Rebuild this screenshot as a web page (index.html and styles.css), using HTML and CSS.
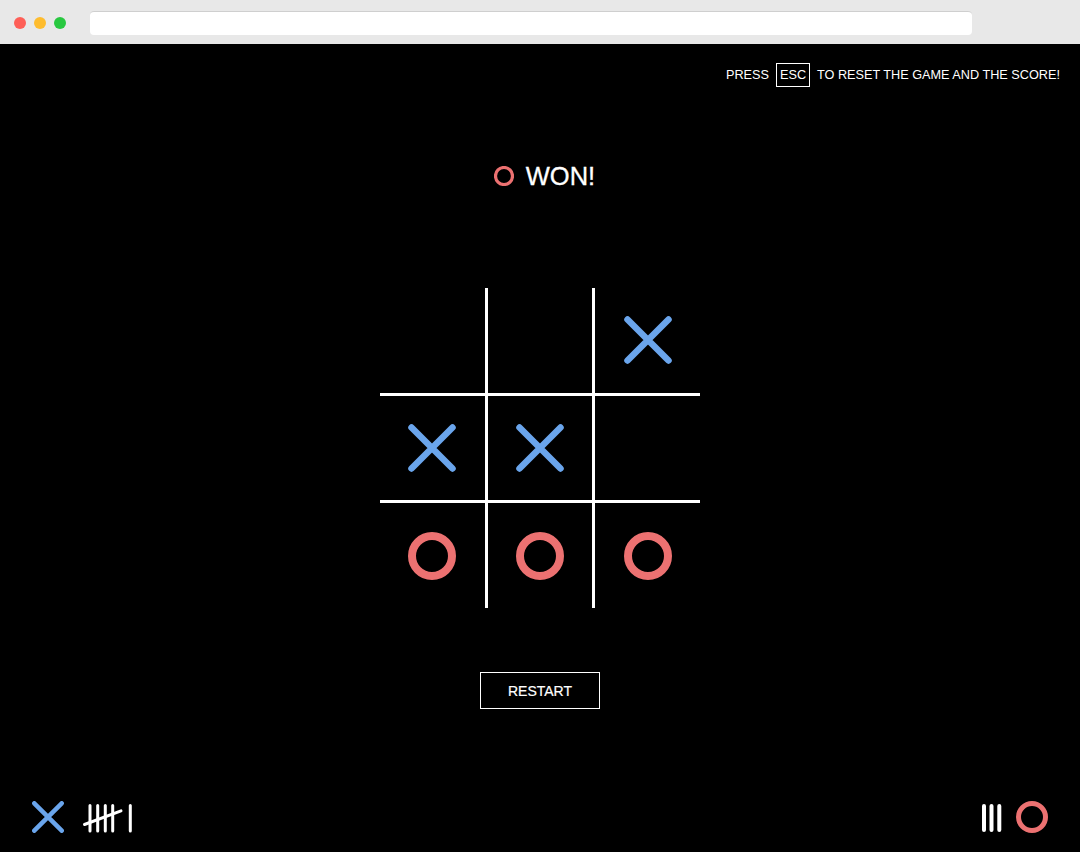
FILE: index.html
```html
<!DOCTYPE html>
<html lang="en">
<head>
<meta charset="utf-8">
<title>Tic Tac Toe</title>
<link rel="stylesheet" href="styles.css">
</head>
<body>
<div class="chrome">
  <div class="lights">
    <span class="light red"></span>
    <span class="light yellow"></span>
    <span class="light green"></span>
  </div>
  <div class="address"></div>
</div>
<main class="game">
  <div class="hint">
    <span>PRESS</span>
    <span class="key">ESC</span>
    <span>TO RESET THE GAME AND THE SCORE!</span>
  </div>
  <div class="status">
    <svg class="status-o" viewBox="0 0 20 20" width="20" height="20"><circle cx="10" cy="10" r="8.5" fill="none" stroke="#ec7171" stroke-width="3.2"/></svg>
    <span class="status-text">WON!</span>
  </div>
  <div class="board">
    <div class="cell"></div>
    <div class="cell"></div>
    <div class="cell"><svg class="mark" viewBox="0 0 48 48" width="48" height="48"><path d="M3.5 3.5 L44.5 44.5 M44.5 3.5 L3.5 44.5" stroke="#6aa5ec" stroke-width="6.5" stroke-linecap="round" fill="none"/></svg></div>
    <div class="cell"><svg class="mark" viewBox="0 0 48 48" width="48" height="48"><path d="M3.5 3.5 L44.5 44.5 M44.5 3.5 L3.5 44.5" stroke="#6aa5ec" stroke-width="6.5" stroke-linecap="round" fill="none"/></svg></div>
    <div class="cell"><svg class="mark" viewBox="0 0 48 48" width="48" height="48"><path d="M3.5 3.5 L44.5 44.5 M44.5 3.5 L3.5 44.5" stroke="#6aa5ec" stroke-width="6.5" stroke-linecap="round" fill="none"/></svg></div>
    <div class="cell"></div>
    <div class="cell"><svg class="mark" viewBox="0 0 48 48" width="48" height="48"><circle cx="24" cy="24" r="20" fill="none" stroke="#ec7171" stroke-width="8"/></svg></div>
    <div class="cell"><svg class="mark" viewBox="0 0 48 48" width="48" height="48"><circle cx="24" cy="24" r="20" fill="none" stroke="#ec7171" stroke-width="8"/></svg></div>
    <div class="cell"><svg class="mark" viewBox="0 0 48 48" width="48" height="48"><circle cx="24" cy="24" r="20" fill="none" stroke="#ec7171" stroke-width="8"/></svg></div>
  </div>
  <button class="restart">RESTART</button>
  <footer class="scores">
    <div class="score score-x">
      <svg viewBox="0 0 32 32" width="32" height="32"><path d="M2.3 2.3 L29.7 29.7 M29.7 2.3 L2.3 29.7" stroke="#6aa5ec" stroke-width="4.5" stroke-linecap="round" fill="none"/></svg>
      <svg class="tally" viewBox="0 0 54 32" width="54" height="32"><g stroke="#fff" stroke-width="3" stroke-linecap="round" fill="none"><path d="M8 4.5 V30 M15.7 4.5 V30 M23.3 4.5 V30 M30.7 4.5 V30 M48.3 4.5 V30"/><path d="M2.5 23.5 L39 9.8"/></g></svg>
    </div>
    <div class="score score-o">
      <svg class="tally" viewBox="0 0 22 32" width="22" height="32"><g stroke="#fff" stroke-width="4" stroke-linecap="round" fill="none"><path d="M4 5 V29 M11.5 5 V29 M19.3 5 V29"/></g></svg>
      <svg viewBox="0 0 32 32" width="32" height="32"><circle cx="16" cy="16" r="13.5" fill="none" stroke="#ec7171" stroke-width="5"/></svg>
    </div>
  </footer>
</main>
</body>
</html>
```
FILE: styles.css
```css
* { box-sizing: border-box; }
html, body { margin: 0; padding: 0; background: #000; }
body {
  width: 1080px;
  height: 852px;
  overflow: hidden;
  font-family: "Liberation Sans", Arial, Helvetica, sans-serif;
  color: #fff;
}
.chrome {
  height: 44px;
  background: #e8e8e8;
  display: flex;
  align-items: center;
  padding-left: 14px;
}
.lights { display: flex; gap: 8px; }
.light { width: 12px; height: 12px; border-radius: 50%; display: block; margin-top: 1px; }
.red { background: #fe5f57; }
.yellow { background: #febc2e; }
.green { background: #28c840; }
.address {
  margin-left: 24px;
  width: 882px;
  height: 24px;
  background: #fff;
  border-radius: 4px;
  border-top: 1px solid #cfcfcf;
  margin-top: 1px;
}
.game {
  height: 808px;
  display: flex;
  flex-direction: column;
  align-items: center;
}
.hint {
  align-self: stretch;
  margin-top: 19px;
  padding-right: 20px;
  height: 24px;
  display: flex;
  justify-content: flex-end;
  align-items: center;
  gap: 7px;
  font-size: 12.7px;
}
.key {
  width: 34px;
  height: 24px;
  border: 1px solid #fff;
  display: flex;
  align-items: center;
  justify-content: center;
}
.status {
  margin-top: 75px;
  height: 28px;
  display: flex;
  align-items: center;
  gap: 12px;
  padding-left: 9px;
}
.status-o { display: block; }
.status-text { font-size: 25.5px; line-height: 28px; -webkit-text-stroke: 0.3px #fff; }
.board {
  margin-top: 98px;
  width: 320px;
  height: 320px;
  display: grid;
  grid-template-columns: repeat(3, 1fr);
  grid-template-rows: repeat(3, 1fr);
  gap: 3px;
  background: #fff;
}
.cell {
  background: #000;
  display: flex;
  align-items: center;
  justify-content: center;
}
.mark { display: block; }
.restart {
  margin-top: 64px;
  width: 120px;
  height: 37px;
  background: #000;
  border: 1px solid #fff;
  color: #fff;
  font-family: "Liberation Sans", Arial, Helvetica, sans-serif;
  font-size: 14px;
  padding: 0;
  padding-top: 1px;
  -webkit-text-stroke: 0.2px #fff;
}
.scores {
  flex: 1;
  align-self: stretch;
  display: flex;
  justify-content: space-between;
  align-items: flex-end;
  padding: 0 32px 19px 32px;
}
.score { display: flex; align-items: center; }
.score svg { display: block; }
.score-x { gap: 18px; }
.score-o { gap: 14px; }
```
